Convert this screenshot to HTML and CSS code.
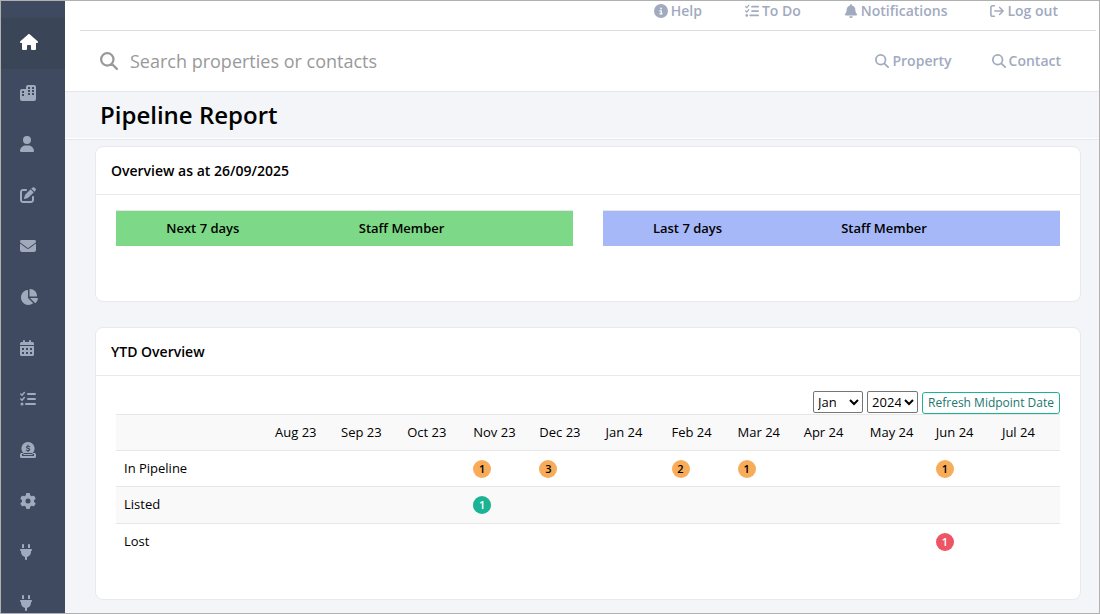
FILE: index.html
```html
<!DOCTYPE html>
<html lang="en">
<head>
    <meta charset="UTF-8">
    <meta name="viewport" content="width=device-width, initial-scale=1.0">
    <title>Pipeline Report</title>
    <link rel="stylesheet" href="styles.css">
</head>
<body>
    <!-- icon set -->
    <svg class="sprite" aria-hidden="true">
        <symbol id="i-home" viewBox="0 0 576 512"><path d="M575.8 255.5c0 18-15 32.1-32 32.1h-32l.7 160.2V472c0 22.1-17.9 40-40 40H392c-22.1 0-40-17.9-40-40v-88c0-17.7-14.3-32-32-32h-64c-17.7 0-32 14.3-32 32v88c0 22.1-17.9 40-40 40h-80c-22.1 0-40-17.9-40-40V287.6H32c-18 0-32-14-32-32.1 0-9 3-17 10-24L266.4 8c7-7 15-8 22-8s15 2 21 7l255.400 224.500c8 7 12 15 11 24z"/></symbol>
        <symbol id="i-city" viewBox="0 0 16 16"><path fill-rule="evenodd" d="M8 0h6a2 2 0 0 1 2 2v12a2 2 0 0 1-2 2H2a2 2 0 0 1-2-2V6a2 2 0 0 1 2-2h4V2a2 2 0 0 1 2-2zM8 2v2h2V2zM12 2v2h2V2zM8 5v2h2V5zM12 5v2h2V5zM8 8v2h2V8zM12 8v2h2V8zM2 6v2h2V6zM2 9v2h2V9z"/></symbol>
        <symbol id="i-user" viewBox="0 0 448 512"><path d="M224 256A128 128 0 1 0 224 0a128 128 0 1 0 0 256zm-45.700 48C79.800 304 0 383.800 0 482.300 0 498.700 13.300 512 29.700 512h388.600c16.400 0 29.700-13.300 29.700-29.700C448 383.800 368.200 304 269.700 304z"/></symbol>
        <symbol id="i-edit" viewBox="0 0 512 512"><path d="M471.600 21.700c-21.900-21.900-57.300-21.900-79.200 0l-30.100 30 97.900 97.900 30.100-30.100c21.900-21.900 21.900-57.300 0-79.200zM172.400 241.700c-6.100 6.100-10.800 13.600-13.500 21.900l-29.600 88.800c-2.900 8.600-.6 18.100 5.800 24.600s15.900 8.700 24.600 5.800l88.800-29.600c8.200-2.700 15.700-7.400 21.900-13.500l167.300-167.400-98-98zM96 64C43 64 0 107 0 160v256c0 53 43 96 96 96h256c53 0 96-43 96-96v-96c0-17.700-14.300-32-32-32s-32 14.300-32 32v96c0 17.700-14.300 32-32 32H96c-17.700 0-32-14.300-32-32V160c0-17.700 14.300-32 32-32h96c17.700 0 32-14.300 32-32s-14.300-32-32-32z"/></symbol>
        <symbol id="i-mail" viewBox="0 0 512 512"><path d="M48 64C21.500 64 0 85.500 0 112c0 15.100 7.100 29.300 19.200 38.400l217.600 163.200c11.400 8.500 27 8.500 38.400 0l217.600-163.200c12.100-9.100 19.200-23.300 19.200-38.400 0-26.500-21.500-48-48-48zM0 176v208c0 35.300 28.700 64 64 64h384c35.300 0 64-28.700 64-64V176L294.400 339.200c-22.800 17.100-54 17.100-76.800 0z"/></symbol>
        <symbol id="i-pie" viewBox="0 0 576 512"><path d="M304 240V16.600c0-9 7-16.600 16-16.600 123.700 0 224 100.300 224 224 0 9-7.600 16-16.600 16zM32 272C32 150.700 122.100 50.300 239 34.300c9.200-1.300 17 6.100 17 15.400V288l156.500 156.500c6.700 6.700 6.200 17.700-1.500 23.100C371.800 495.600 325.800 512 272 512 140 512 32 404.600 32 272zm526.400 16c9.300 0 16.600 7.800 15.400 17-7.700 55.900-34.600 105.600-73.900 142.300-6 5.600-15.400 5.200-21.200-.7L320 288z"/></symbol>
        <symbol id="i-calendar" viewBox="0 0 14 16"><path fill-rule="evenodd" d="M3 1a1 1 0 0 1 2 0v1h4V1a1 1 0 0 1 2 0v1h1.500A1.500 1.500 0 0 1 14 3.500V5H0V3.500A1.500 1.500 0 0 1 1.500 2H3zM0 6h14v8.500a1.500 1.500 0 0 1-1.500 1.500h-11A1.500 1.500 0 0 1 0 14.500zM2 8v2h2V8zM6 8v2h2V8zM10 8v2h2V8zM2 12v2h2v-2zM6 12v2h2v-2zM10 12v2h2v-2z"/></symbol>
        <symbol id="i-tasks" viewBox="0 0 16 16"><path fill="none" stroke="currentColor" stroke-width="2" stroke-linecap="round" d="M8 3h7M8 8h7M6 13h9"/><path fill="none" stroke="currentColor" stroke-width="1.500" stroke-linecap="round" stroke-linejoin="round" d="M.8 3l1.200 1.200 2.300-2.700M.8 8l1.200 1.200 2.300-2.700"/><circle cx="2" cy="13" r="1.500"/></symbol>
        <symbol id="i-coin" viewBox="0 0 16 16"><path fill-rule="evenodd" d="M8 0a6.500 6.500 0 0 1 5.200 10.400l-.5.600H3.300l-.5-.6A6.500 6.500 0 0 1 8 0zM1.500 11H3l1 1H2v2h12v-2h-2l1-1h1.500a1.500 1.500 0 0 1 1.500 1.500v2a1.500 1.500 0 0 1-1.500 1.500h-13A1.500 1.500 0 0 1 0 14.500v-2A1.500 1.500 0 0 1 1.500 11zM3.500 12h9v1h-9z"/><path fill="none" stroke="#3f4a60" stroke-width="1.200" stroke-linecap="round" d="M9.600 4.700C9 4.200 6.500 3.800 6.500 5.200c0 1.500 3.200.9 3.200 2.400 0 1.400-2.500 1.200-3.300.5M8 3v1M8 8.600v1"/></symbol>
        <symbol id="i-gear" viewBox="0 0 512 512"><path d="M495.900 166.600c3.200 8.700.5 18.400-6.400 24.600l-43.300 39.400c1.100 8.300 1.700 16.800 1.700 25.400s-.6 17.100-1.700 25.400l43.300 39.400c6.900 6.200 9.600 15.900 6.400 24.600-4.400 11.900-9.700 23.300-15.800 34.300l-4.700 8.100c-6.600 11-14 21.400-22.100 31.200-5.900 7.200-15.700 9.600-24.500 6.800l-55.700-17.700c-13.400 10.300-28.200 18.900-44 25.400l-12.500 57.100c-2 9.100-9 16.300-18.200 17.800-13.800 2.300-28 3.500-42.500 3.500s-28.700-1.200-42.500-3.500c-9.200-1.500-16.200-8.700-18.200-17.800l-12.500-57.100c-15.800-6.500-30.600-15.100-44-25.400l-55.600 17.800c-8.800 2.800-18.600.3-24.500-6.800-8.100-9.800-15.500-20.200-22.100-31.200l-4.700-8.100c-6.100-11-11.400-22.400-15.800-34.300-3.200-8.700-.5-18.400 6.400-24.600l43.300-39.400C64.600 273.100 64 264.600 64 256s.6-17.100 1.700-25.400l-43.300-39.400c-6.900-6.200-9.600-15.900-6.400-24.600 4.400-11.900 9.700-23.300 15.800-34.300l4.700-8.100c6.600-11 14-21.400 22.100-31.200 5.900-7.200 15.700-9.600 24.500-6.800l55.700 17.700c13.400-10.300 28.200-18.900 44-25.400l12.500-57.100c2-9.100 9-16.300 18.200-17.800C227.300 1.200 241.500 0 256 0s28.700 1.200 42.500 3.500c9.200 1.500 16.200 8.700 18.200 17.800l12.500 57.100c15.800 6.500 30.600 15.100 44 25.400l55.700-17.700c8.800-2.800 18.600-.3 24.500 6.800 8.100 9.800 15.500 20.200 22.100 31.200l4.700 8.100c6.100 11 11.400 22.400 15.800 34.300zM256 336a80 80 0 1 0 0-160 80 80 0 1 0 0 160z"/></symbol>
        <symbol id="i-plug" viewBox="0 0 384 512"><path d="M96 0C78.300 0 64 14.300 64 32v96h64V32c0-17.700-14.300-32-32-32zm192 0c-17.700 0-32 14.300-32 32v96h64V32c0-17.700-14.300-32-32-32zM32 160c-17.700 0-32 14.300-32 32s14.300 32 32 32v32c0 77.400 55 142 128 156.800V480c0 17.700 14.300 32 32 32s32-14.300 32-32v-67.200C297 398 352 333.400 352 256v-32c17.700 0 32-14.300 32-32s-14.300-32-32-32z"/></symbol>
        <symbol id="i-info" viewBox="0 0 512 512"><path fill-rule="evenodd" d="M256 512A256 256 0 1 0 256 0a256 256 0 1 0 0 512zM216 336h24v-64h-24c-32 0-32-48 0-48h48c13 0 24 11 24 24v88h8c32 0 32 48 0 48h-80c-32 0-32-48 0-48zM256 128a32 32 0 1 1 0 64 32 32 0 1 1 0-64z"/></symbol>
        <symbol id="i-bell" viewBox="0 0 448 512"><path d="M224 0c-17.700 0-32 14.300-32 32v19.200C119 66 64 130.600 64 208v18.800c0 47-17.300 92.400-48.500 127.600l-7.400 8.300c-8.400 9.400-10.400 22.900-5.300 34.400S19.400 416 32 416h384c12.600 0 24-7.400 29.200-18.900s3.100-25-5.300-34.400l-7.400-8.300C401.300 319.200 384 273.900 384 226.800V208c0-77.400-55-142-128-156.800V32c0-17.700-14.300-32-32-32zm45.300 493.300c12-12 18.700-28.300 18.700-45.300H160c0 17 6.700 33.300 18.700 45.300s28.300 18.700 45.300 18.700 33.300-6.700 45.300-18.700z"/></symbol>
        <symbol id="i-logout" viewBox="0 0 16 16"><path fill="none" stroke="currentColor" stroke-width="1.800" stroke-linecap="round" stroke-linejoin="round" d="M5 2H3a2 2 0 0 0-2 2v8a2 2 0 0 0 2 2h2M5.500 8H15M11 4l4 4-4 4"/></symbol>
        <symbol id="i-search" viewBox="0 0 16 16"><path fill="none" stroke="currentColor" stroke-width="2" stroke-linecap="round" d="M6.500 1a5.500 5.500 0 1 1 0 11 5.500 5.500 0 0 1 0-11zM10.600 10.600L15 15"/></symbol>
    </svg>

    <div class="wrapper">
        <nav class="sidebar" aria-label="Main">
            <a href="#" class="active" aria-label="Home"><svg class="wide"><use href="#i-home"/></svg></a>
            <a href="#" aria-label="Properties"><svg><use href="#i-city"/></svg></a>
            <a href="#" aria-label="Contacts"><svg class="narrow"><use href="#i-user"/></svg></a>
            <a href="#" aria-label="Edit"><svg><use href="#i-edit"/></svg></a>
            <a href="#" aria-label="Mail"><svg><use href="#i-mail"/></svg></a>
            <a href="#" aria-label="Reports"><svg class="wide"><use href="#i-pie"/></svg></a>
            <a href="#" aria-label="Calendar"><svg class="narrow"><use href="#i-calendar"/></svg></a>
            <a href="#" aria-label="Tasks"><svg><use href="#i-tasks"/></svg></a>
            <a href="#" aria-label="Accounts"><svg><use href="#i-coin"/></svg></a>
            <a href="#" aria-label="Settings"><svg><use href="#i-gear"/></svg></a>
            <a href="#" aria-label="Integrations"><svg class="slim"><use href="#i-plug"/></svg></a>
            <a href="#" aria-label="Plugins"><svg class="slim"><use href="#i-plug"/></svg></a>
        </nav>

        <main class="main">
            <header class="header">
                <div class="top-links">
                    <a href="#"><svg><use href="#i-info"/></svg>Help</a>
                    <a href="#"><svg><use href="#i-tasks"/></svg>To Do</a>
                    <a href="#"><svg><use href="#i-bell"/></svg>Notifications</a>
                    <a href="#"><svg><use href="#i-logout"/></svg>Log out</a>
                </div>
                <form class="search-bar">
                    <label for="search" aria-label="Search"><svg><use href="#i-search"/></svg></label>
                    <input type="text" id="search" placeholder="Search properties or contacts">
                    <a href="#"><svg><use href="#i-search"/></svg>Property</a>
                    <a href="#"><svg><use href="#i-search"/></svg>Contact</a>
                </form>
            </header>

            <div class="page-heading">
                <h1>Pipeline Report</h1>
            </div>

            <div class="content">
                <section class="card">
                    <h2>Overview as at 26/09/2025</h2>
                    <div class="card-body overview">
                        <table class="days next">
                            <thead>
                                <tr><th>Next 7 days</th><th>Staff Member</th><th></th></tr>
                            </thead>
                        </table>
                        <table class="days last">
                            <thead>
                                <tr><th>Last 7 days</th><th>Staff Member</th><th></th></tr>
                            </thead>
                        </table>
                    </div>
                </section>

                <section class="card">
                    <h2>YTD Overview</h2>
                    <div class="card-body ytd">
                        <form class="toolbar">
                            <select id="month" aria-label="Month">
                                <option>Jan</option>
                                <option>Feb</option>
                                <option>Mar</option>
                            </select>
                            <select id="year" aria-label="Year">
                                <option>2024</option>
                                <option>2025</option>
                            </select>
                            <button type="button">Refresh Midpoint Date</button>
                        </form>
                        <table class="months">
                            <thead>
                                <tr>
                                    <th></th>
                                    <th>Aug 23</th>
                                    <th>Sep 23</th>
                                    <th>Oct 23</th>
                                    <th>Nov 23</th>
                                    <th>Dec 23</th>
                                    <th>Jan 24</th>
                                    <th>Feb 24</th>
                                    <th>Mar 24</th>
                                    <th>Apr 24</th>
                                    <th>May 24</th>
                                    <th>Jun 24</th>
                                    <th>Jul 24</th>
                                </tr>
                            </thead>
                            <tbody>
                                <tr>
                                    <td>In Pipeline</td>
                                    <td></td><td></td><td></td>
                                    <td><span class="badge warning">1</span></td>
                                    <td><span class="badge warning">3</span></td>
                                    <td></td>
                                    <td><span class="badge warning">2</span></td>
                                    <td><span class="badge warning">1</span></td>
                                    <td></td><td></td>
                                    <td><span class="badge warning">1</span></td>
                                    <td></td>
                                </tr>
                                <tr>
                                    <td>Listed</td>
                                    <td></td><td></td><td></td>
                                    <td><span class="badge primary">1</span></td>
                                    <td></td><td></td><td></td><td></td><td></td><td></td><td></td><td></td>
                                </tr>
                                <tr>
                                    <td>Lost</td>
                                    <td></td><td></td><td></td><td></td><td></td><td></td><td></td><td></td><td></td><td></td>
                                    <td><span class="badge danger">1</span></td>
                                    <td></td>
                                </tr>
                            </tbody>
                        </table>
                    </div>
                </section>
            </div>
        </main>
    </div>
</body>
</html>
```
FILE: styles.css
```css
* {
    box-sizing: border-box;
}
body {
    font-family: "Open Sans", "Noto Sans", sans-serif;
    font-size: 13px;
    line-height: 20px;
    margin: 0;
    color: #000;
    background: #f3f5f9;
}
a {
    text-decoration: none;
}
svg {
    fill: currentColor;
    flex: none;
}
.sprite {
    display: none;
}
.wrapper {
    display: flex;
    height: 100vh;
    overflow: hidden;
    border: 1px solid #b0b0b0;
}

/* Sidebar */
.sidebar {
    flex: none;
    width: 64px;
    padding-top: 17px;
    background: #3f4a60;
}
.sidebar a {
    display: flex;
    align-items: center;
    height: 51px;
    padding: 0 0 3px 19px;
    color: #a1aabd;
}
.sidebar a.active {
    background: #3a4558;
    color: #fff;
}
.sidebar svg {
    width: 16px;
    height: 16px;
}
.sidebar svg.wide {
    width: 18px;
}
.sidebar svg.narrow {
    width: 14px;
}
.sidebar svg.slim {
    width: 12px;
}

/* Header */
.main {
    flex: 1;
    min-width: 0;
}
.header {
    background: #fff;
    border-bottom: 1px solid #e4e7ec;
}
.header a {
    display: flex;
    align-items: center;
    gap: 3px;
    font-size: 14px;
    font-weight: 600;
    color: #a1aabf;
}
.header a svg {
    width: 14px;
    height: 14px;
}
.top-links {
    display: flex;
    justify-content: flex-end;
    gap: 43px;
    height: 30px;
    margin: 0 3px 0 15px;
    padding: 0 38px 9px 0;
    border-bottom: 1px solid #dcdcdc;
}
.search-bar {
    display: flex;
    align-items: center;
    gap: 40px;
    height: 60px;
    padding: 0 38px 0 35px;
}
.search-bar label {
    display: flex;
    margin-right: -28px;
    color: #999;
}
.search-bar label svg {
    width: 18px;
    height: 18px;
}
.search-bar input {
    flex: 1;
    min-width: 0;
    padding: 0;
    border: none;
    outline: none;
    font-family: inherit;
    font-size: 18px;
}
.search-bar input::placeholder {
    color: #999;
}
.page-heading {
    padding: 7px 35px 9px;
    border-bottom: 1px solid #e4e7ec;
    box-shadow: inset 0 -1px #fff;
}
h1 {
    margin: 0;
    font-size: 24px;
    line-height: 31px;
    font-weight: 600;
}

/* Cards */
.content {
    display: flex;
    flex-direction: column;
    gap: 25px;
    padding: 6px 18px 13px 30px;
}
.card {
    background: #fff;
    border: 1px solid #e7eaec;
    border-radius: 8px;
}
.card h2 {
    margin: 0;
    padding: 14px 15px 13px;
    border-bottom: 1px solid #e7eaec;
    font-size: 14px;
    line-height: 20px;
    font-weight: 600;
}
.card-body {
    padding: 15px 20px;
}
table {
    width: 100%;
    border-collapse: collapse;
    table-layout: fixed;
}
th, td {
    padding: 8px;
    line-height: 19px;
    border-top: 1px solid #e7e7e7;
}
.overview {
    display: grid;
    grid-template-columns: 1fr 1fr;
    gap: 30px;
    padding-bottom: 55px;
}
.days th {
    font-weight: 600;
}
.days th:first-child {
    width: 38%;
}
.days th:last-child {
    width: 13%;
}
.days.next {
    background: #7dd987;
}
.days.last {
    background: #a6b8f7;
}
.days.last th:first-child {
    width: 37%;
}
.days.last th:last-child {
    width: 14%;
}

/* Months table */
.ytd {
    padding-bottom: 40px;
}
.toolbar {
    display: flex;
    justify-content: flex-end;
    gap: 4px;
}
.toolbar select {
    height: 22px;
    padding: 0;
    border: 1px solid #767676;
    border-radius: 2px;
    background: #fff;
    color: #000;
    font-family: inherit;
    font-size: 13px;
}
#month {
    width: 50px;
}
#year {
    width: 51px;
}
.toolbar button {
    height: 22px;
    margin-top: 1px;
    padding: 0 5px;
    border: 1px solid #1ab394;
    border-radius: 3px;
    background: #fff;
    color: #20776f;
    font-family: inherit;
    font-size: 12px;
    line-height: 18px;
    cursor: pointer;
}
.months th {
    font-weight: 400;
    text-align: left;
    white-space: nowrap;
}
.months th:first-child {
    width: 16%;
}
.months tr:nth-child(even) td, .months th {
    background: #f9f9f9;
}
.months tr:nth-child(even) td {
    padding-bottom: 9px;
}
.badge {
    display: block;
    width: 18px;
    height: 18px;
    border-radius: 9px;
    font-size: 11px;
    line-height: 18px;
    font-weight: 600;
    text-align: center;
}
.badge.warning {
    background: #f8ac59;
}
.badge.primary {
    background: #1ab394;
    color: #fff;
}
.badge.danger {
    background: #ed5565;
    color: #fff;
}
```
